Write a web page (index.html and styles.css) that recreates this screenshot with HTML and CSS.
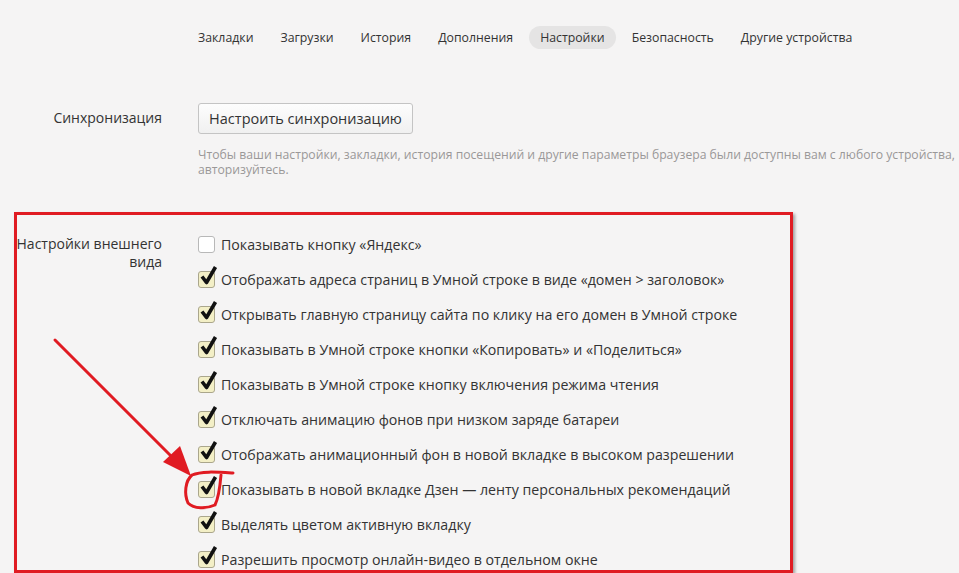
FILE: index.html
```html
<!DOCTYPE html>
<html lang="ru">
<head>
  <meta charset="UTF-8" />
  <title>Настройки</title>
  <link rel="stylesheet" href="styles.css">
</head>
<body>

  <nav class="tabs">
    <a>Закладки</a>
    <a>Загрузки</a>
    <a>История</a>
    <a>Дополнения</a>
    <a class="active">Настройки</a>
    <a>Безопасность</a>
    <a>Другие устройства</a>
  </nav>

  <section class="row sync">
    <div class="label">Синхронизация</div>
    <div class="content">
      <button class="btn">Настроить синхронизацию</button>
      <p class="hint">Чтобы ваши настройки, закладки, история посещений и другие параметры браузера были доступны вам с любого устройства, авторизуйтесь.</p>
    </div>
  </section>

  <section class="row look">
    <div class="label">Настройки внешнего<br>вида</div>
    <div class="content">
      <label class="opt"><span class="box"></span>Показывать кнопку «Яндекс»</label>
      <label class="opt"><span class="box on"></span>Отображать адреса страниц в Умной строке в виде «домен &gt; заголовок»</label>
      <label class="opt"><span class="box on"></span>Открывать главную страницу сайта по клику на его домен в Умной строке</label>
      <label class="opt"><span class="box on"></span>Показывать в Умной строке кнопки «Копировать» и «Поделиться»</label>
      <label class="opt"><span class="box on"></span>Показывать в Умной строке кнопку включения режима чтения</label>
      <label class="opt"><span class="box on"></span>Отключать анимацию фонов при низком заряде батареи</label>
      <label class="opt"><span class="box on"></span>Отображать анимационный фон в новой вкладке в высоком разрешении</label>
      <label class="opt"><span class="box on"></span>Показывать в новой вкладке Дзен — ленту персональных рекомендаций</label>
      <label class="opt"><span class="box on"></span>Выделять цветом активную вкладку</label>
      <label class="opt"><span class="box on"></span>Разрешить просмотр онлайн-видео в отдельном окне</label>
    </div>
  </section>

  <!-- пометки поверх скриншота -->
  <div class="frame"></div>
  <svg class="marks" width="959" height="573" viewBox="0 0 959 573">
    <line x1="55" y1="340" x2="178" y2="463" stroke="#e01b22" stroke-width="3" stroke-linecap="round"/>
    <path d="M163 462 L191 476 L180 446 Z" fill="#e01b22"/>
    <path d="M233 473 C216 472 201 471 192 475 C185 481 184 494 188 503 C194 509 206 509 215 505 C219 497 220 487 221 475" fill="none" stroke="#e01b22" stroke-width="3" stroke-linecap="round"/>
  </svg>

  <script>
    // галочки рисуем одинаковым svg
    const tick = '<svg width="22" height="22" viewBox="0 0 22 22"><path d="M4 11.5 L8.5 17.5 L17.5 2" fill="none" stroke="#111" stroke-width="3.6" stroke-linejoin="round"/></svg>';
    document.querySelectorAll('.box.on').forEach(b => b.innerHTML = tick);
  </script>
</body>
</html>
```

FILE: styles.css
```css
body {
  margin: 0;
  background-color: #f5f4f4;
  font-family: 'Open Sans', 'Noto Sans', sans-serif;
  color: #333;
  overflow: hidden;
}

.tabs {
  display: flex;
  align-items: center;
  gap: 5px;
  padding: 26px 0 0 187px;
  height: 23px;
  font-size: 12.3px;
}

.tabs a {
  padding: 0 11px;
  line-height: 23px;
  border-radius: 12px;
  color: #333;
}

.tabs a.active {
  background-color: #e5e4e4;
}

.row {
  display: grid;
  grid-template-columns: 162px auto;
  column-gap: 36px;
}

.label {
  text-align: right;
  font-size: 14px;
  line-height: 18px;
}

.sync {
  margin-top: 54px;
}

.sync .label {
  padding-top: 6px;
}

.btn {
  font-family: inherit;
  font-size: 14.5px;
  color: #333;
  height: 31px;
  width: 215px;
  padding: 0;
  background: linear-gradient(#fdfdfd, #f0f0f0);
  border: 1px solid #c4c4c4;
  border-radius: 3px;
}

.hint {
  margin: 13px 0 0;
  width: 800px;
  font-size: 12.2px;
  line-height: 15px;
  color: #9a9898;
}

.look {
  margin-top: 58px;
}

.look .label {
  padding-top: 0;
}

.opt {
  display: flex;
  align-items: center;
  height: 35px;
  font-size: 14.2px;
  color: #333;
  white-space: nowrap;
}

.opt:first-child {
  margin-top: -8px;
}

.box {
  position: relative;
  box-sizing: border-box;
  width: 17px;
  height: 17px;
  margin-right: 6px;
  border: 1px solid #b8b8b8;
  border-radius: 3px;
  background-color: #fff;
  flex-shrink: 0;
}

.box.on {
  background-color: #f3efc6;
  border-color: #aaa68c;
}

.box svg {
  position: absolute;
  left: -1px;
  top: -7px;
}

.frame {
  position: absolute;
  left: 14px;
  top: 212px;
  width: 773px;
  height: 355px;
  border: 3px solid #e01b22;
  box-shadow: 2px 2px 3px rgba(0, 0, 0, 0.35);
}

.marks {
  position: absolute;
  left: 0;
  top: 0;
}
```
